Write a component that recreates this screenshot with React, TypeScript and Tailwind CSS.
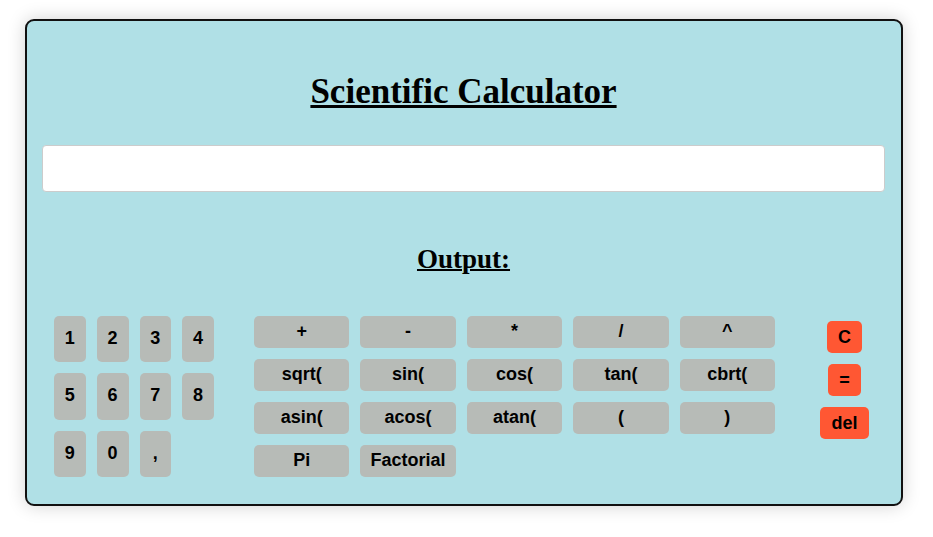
import { useState } from "react";

const digits = ["1", "2", "3", "4", "5", "6", "7", "8", "9", "0", ","];
const operations = [
  "+", "-", "*", "/", "^",
  "sqrt(", "sin(", "cos(", "tan(", "cbrt(",
  "asin(", "acos(", "atan(", "(", ")",
  "Pi", "Factorial",
];

const keyBase = "rounded-[5px] text-[18px] leading-5 font-bold text-black cursor-pointer";
const grayKey = `${keyBase} bg-[#b7bbb7] pb-[2px]`;
const redKey = `${keyBase} h-8 bg-[#ff5733] px-[11px]`;

export default function App() {
  const [expression, setExpression] = useState("");
  const append = (value: string) => setExpression((current) => current + value);

  return (
    <main className="pt-[19px] pr-[30px] pb-[31px] pl-[25px] font-['Liberation_Sans',Arial,sans-serif]">
      <section className="rounded-[9px] border-2 border-[#111] bg-[#b0e0e6] pt-[51px] pr-4 pb-[27px] pl-[15px] shadow-[0_0_18px_rgba(0,0,0,0.18)]">
        <h1 className="text-center font-['Liberation_Serif','Times_New_Roman',serif] text-[35px] leading-10 font-bold text-black underline decoration-[3px]">
          Scientific Calculator
        </h1>
        <input
          type="text"
          aria-label="Expression"
          value={expression}
          onChange={(event) => setExpression(event.target.value)}
          className="mt-[33px] block h-[47px] w-full rounded-[4px] border border-[#ccc] bg-white px-3 text-[20px] outline-none"
        />
        <h2 className="mt-[51px] text-center font-['Liberation_Serif','Times_New_Roman',serif] text-[27px] leading-8 font-bold text-black underline decoration-2">
          Output:
        </h2>
        <div className="mt-[41px] flex items-start gap-10 pr-[11px] pl-3">
          <div className="grid h-[161px] w-40 shrink-0 grid-cols-4 grid-rows-3 gap-[11px]">
            {digits.map((key) => (
              <button key={key} type="button" onClick={() => append(key)} className={grayKey}>
                {key}
              </button>
            ))}
          </div>
          <div className="grid flex-1 grid-cols-5 gap-[11px]">
            {operations.map((key) => (
              <button key={key} type="button" onClick={() => append(key)} className={`${grayKey} h-8`}>
                {key}
              </button>
            ))}
          </div>
          <div className="flex w-[59px] shrink-0 flex-col items-center gap-[11px] pt-[5px]">
            <button type="button" onClick={() => setExpression("")} className={redKey}>
              C
            </button>
            <button type="button" className={redKey}>
              =
            </button>
            <button type="button" onClick={() => setExpression((current) => current.slice(0, -1))} className={redKey}>
              del
            </button>
          </div>
        </div>
      </section>
    </main>
  );
}
